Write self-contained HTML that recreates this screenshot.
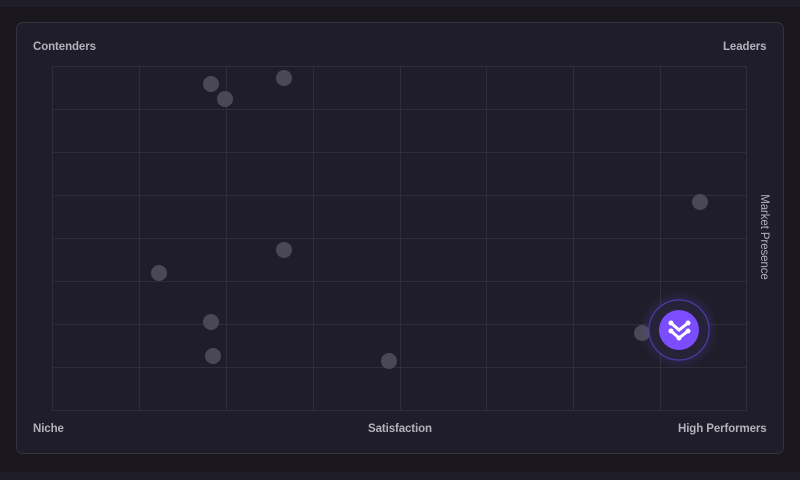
<!DOCTYPE html>
<html><head><style>
html,body{margin:0;padding:0;width:800px;height:480px;overflow:hidden;background:#19171d;font-family:"Liberation Sans",sans-serif;}
.top{position:absolute;left:0;top:0;width:800px;height:7px;background:#1f1d27}
.bot{position:absolute;left:0;top:472px;width:800px;height:8px;background:#1f1d27}
.card{position:absolute;left:16px;top:22px;width:766px;height:430px;background:#1f1d29;border:1px solid #34323e;border-radius:7px}
.lbl{position:absolute;color:#b4b2bc;font-size:11.5px;font-weight:bold;letter-spacing:-0.1px}
</style></head><body>
<div class="top"></div><div class="bot"></div>
<div class="card"></div>
<div class="lbl" style="left:33px;top:41px">Contenders</div>
<div class="lbl" style="left:723px;top:41px">Leaders</div>
<div class="lbl" style="left:33px;top:423px">Niche</div>
<div class="lbl" style="left:368px;top:423px">Satisfaction</div>
<div class="lbl" style="left:678px;top:423px">High Performers</div>
<div class="lbl" style="left:716px;top:231px;width:96px;text-align:center;transform:rotate(90deg);font-weight:normal">Market Presence</div>
<svg width="800" height="480" style="position:absolute;left:0;top:0">
<defs><radialGradient id="g"><stop offset="0.5" stop-color="#7c4dff" stop-opacity="0.25"/><stop offset="1" stop-color="#7c4dff" stop-opacity="0"/></radialGradient></defs>
<g stroke="#2f2d3a" stroke-width="1" fill="none">
<rect x="52.5" y="66.5" width="694" height="344"/>
<path d="M139.5 66V410M226.5 66V410M313.5 66V410M400.5 66V410M486.5 66V410M573.5 66V410M660.5 66V410M52 109.5H746M52 152.5H746M52 195.5H746M52 238.5H746M52 281.5H746M52 324.5H746M52 367.5H746"/>
</g>
<g fill="#4b4855">
<circle cx="211" cy="84" r="8"/><circle cx="225" cy="99" r="8"/><circle cx="284" cy="78" r="8"/>
<circle cx="700" cy="202" r="8"/><circle cx="284" cy="250" r="8"/><circle cx="159" cy="273" r="8"/>
<circle cx="211" cy="322" r="8"/><circle cx="213" cy="356" r="8"/><circle cx="389" cy="361" r="8"/>
<circle cx="642" cy="333" r="8"/>
</g>
<circle cx="679" cy="330" r="40" fill="url(#g)"/>
<circle cx="679" cy="330" r="30" fill="#262238" stroke="#4e3ba8" stroke-width="1.2"/>
<circle cx="679" cy="330" r="20" fill="#7c4dff"/>
<g stroke="#fff" stroke-width="3" stroke-linecap="round" fill="none">
<path d="M671 323L679 330L688 323M671 331L679 338L688 331"/>
</g>
<g fill="#fff"><circle cx="671" cy="323" r="2.5"/><circle cx="688" cy="323" r="2.5"/><circle cx="671" cy="331" r="2.5"/><circle cx="688" cy="331" r="2.5"/><circle cx="679" cy="338" r="2.5"/></g>
</svg>
</body></html>
